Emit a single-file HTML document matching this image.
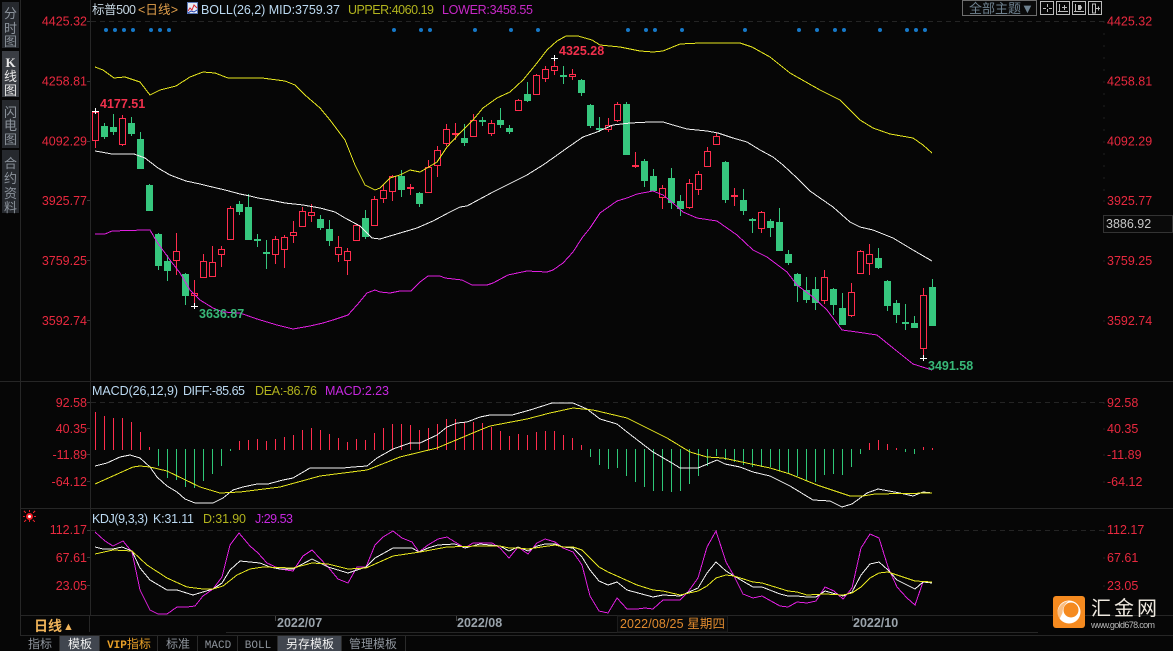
<!DOCTYPE html>
<html><head><meta charset="utf-8"><title>标普500</title>
<style>
html,body{margin:0;padding:0;background:#060606;width:1173px;height:651px;overflow:hidden}
svg{display:block}
text{font-family:"Liberation Sans","Noto Sans CJK SC",sans-serif;font-size:12.5px}
.l{fill:#e8293f;text-anchor:end}
.r{fill:#e8293f}
.b{font-weight:bold;font-size:12.5px}
.c{fill:none;stroke-width:1;shape-rendering:crispEdges}
.side{fill:#8b929b;font-size:13px;text-anchor:middle}
.tab{fill:#8e949c;font-size:12px;text-anchor:middle}
.date{fill:#9aa3ab;font-weight:bold;font-size:12.5px}
</style></head><body>
<svg width="1173" height="651" viewBox="0 0 1173 651" xmlns="http://www.w3.org/2000/svg">
<rect width="1173" height="651" fill="#060606"/>

<!-- frame -->
<g stroke="#262626" stroke-width="1" shape-rendering="crispEdges" fill="none">
<path d="M20.5 0V635M90.5 0V615M89.5 615V632"/>
<path d="M0 381.5H1173M20 508.5H1173M20 615.5H1173M226 632.5H1038M20 635.5H1173"/>
</g>
<g stroke="#242424" stroke-dasharray="5 4" shape-rendering="crispEdges" fill="none">
<path d="M91 21.500H1104M91 402.500H1104M91 530.500H1104"/>
</g>
<g stroke="#3a3a3a" shape-rendering="crispEdges" fill="none">
<path d="M87 21.500h3M87 81.500h3M87 141.500h3M87 200.500h3M87 260.500h3M87 320.500h3M87 402.500h3M87 428.500h3M87 454.500h3M87 481.500h3M87 530.500h3M87 557.500h3M87 585.500h3"/>
<path d="M1104 21.500v1M1104 33.500v1M1104 45.500v1M1104 57.500v1M1104 69.500v1M1104 81.500v1M1104 93.500v1M1104 105.500v1M1104 117.500v1M1104 129.500v1M1104 141.500v1M1104 153.500v1M1104 165.500v1M1104 177.500v1M1104 189.500v1M1104 200.500v1M1104 260.500v1M1104 320.500v1M1104 402.500v1M1104 428.500v1M1104 454.500v1M1104 481.500v1M1104 530.500v1M1104 557.500v1M1104 585.500v1"/>
</g>

<!-- sidebar -->
<rect x="2" y="2" width="17" height="46" fill="#26292e"/>
<rect x="2" y="51" width="17" height="46" fill="#3a3d43"/>
<rect x="2" y="100" width="17" height="48" fill="#26292e"/>
<rect x="2" y="150" width="17" height="63" fill="#26292e"/>
<g class="side">
<text class="side" x="10.500" y="18">分</text><text class="side" x="10.500" y="33">时</text><text class="side" x="10.500" y="46">图</text>
<text class="side" x="10.500" y="67" style="fill:#e8e8e8;font-weight:bold;font-family:'Liberation Serif',serif">K</text><text class="side" x="10.500" y="81" style="fill:#e8e8e8">线</text><text class="side" x="10.500" y="95" style="fill:#e8e8e8">图</text>
<text class="side" x="10.500" y="117">闪</text><text class="side" x="10.500" y="130">电</text><text class="side" x="10.500" y="144">图</text>
<text class="side" x="10.500" y="168">合</text><text class="side" x="10.500" y="183">约</text><text class="side" x="10.500" y="198">资</text><text class="side" x="10.500" y="212">料</text>
</g>

<!-- left axis -->
<text class="l" x="87" y="25.500">4425.32</text><text class="l" x="87" y="85.500">4258.81</text><text class="l" x="87" y="145.500">4092.29</text><text class="l" x="87" y="205">3925.77</text><text class="l" x="87" y="265">3759.25</text><text class="l" x="87" y="325">3592.74</text>
<text class="l" x="87" y="407">92.58</text><text class="l" x="87" y="433">40.35</text><text class="l" x="87" y="459">-11.89</text><text class="l" x="87" y="486">-64.12</text>
<text class="l" x="87" y="534">112.17</text><text class="l" x="87" y="562">67.61</text><text class="l" x="87" y="590">23.05</text>
<!-- right axis -->
<text class="r" x="1107" y="25.500">4425.32</text><text class="r" x="1107" y="85.500">4258.81</text><text class="r" x="1107" y="145.500">4092.29</text><text class="r" x="1107" y="205">3925.77</text><text class="r" x="1107" y="265">3759.25</text><text class="r" x="1107" y="325">3592.74</text>
<text class="r" x="1107" y="407">92.58</text><text class="r" x="1107" y="433">40.35</text><text class="r" x="1107" y="459">-11.89</text><text class="r" x="1107" y="486">-64.12</text>
<text class="r" x="1107" y="534">112.17</text><text class="r" x="1107" y="562">67.61</text><text class="r" x="1107" y="590">23.05</text>
<rect x="1103.500" y="215.500" width="69" height="17" fill="#0a0a0a" stroke="#333" shape-rendering="crispEdges"/>
<text x="1106" y="228" fill="#c8c8c8">3886.92</text>

<!-- header -->
<text x="92" y="14" fill="#c6d6e2" textLength="44">标普500</text>
<text x="138" y="14" fill="#e2a04c" textLength="40">&lt;日线&gt;</text>
<g shape-rendering="crispEdges"><rect x="187.500" y="2.500" width="10" height="11" fill="#e8edf5" stroke="#5a78b8"/></g>
<path d="M188 11l2-3 2 2 2-5 3 3" fill="none" stroke="#d8242c" stroke-width="1"/>
<path d="M188 13l3-2 3 1 3-2" fill="none" stroke="#2040b0" stroke-width="1"/>
<text x="201" y="14" fill="#bcdaf2" textLength="139">BOLL(26,2) MID:3759.37</text>
<text x="348" y="14" fill="#b2b41e" textLength="86">UPPER:4060.19</text>
<text x="442" y="14" fill="#c828c8" textLength="91">LOWER:3458.55</text>

<!-- top right controls -->
<rect x="962.500" y="0.500" width="74" height="15" fill="#0a0a0a" stroke="#6e6e6e" shape-rendering="crispEdges"/>
<text x="969" y="13" fill="#6f8290" style="font-size:13px">全部主题▼</text>
<g fill="none" stroke="#bcbcbc" shape-rendering="crispEdges">
<rect x="1040.500" y="1.500" width="13" height="13"/><rect x="1056.500" y="1.500" width="13" height="13"/><rect x="1072.500" y="1.500" width="13" height="13"/><rect x="1088.500" y="1.500" width="13" height="13"/>
<path d="M1047.500 4v3M1047.500 9v3M1043 8.500h3M1049 8.500h3"/>
<path d="M1059.500 4v8M1058 11.500h10M1064.500 5v5M1062 7.500h5"/>
<path d="M1075.500 4v8M1074 11.500h10M1078.500 5v5M1079.500 5.500v4h1v-4zM1081.500 6.500v2"/>
<path d="M1092.500 4v9h3v-9zM1096 8.500h4M1098.500 6.500v4"/>
</g>

<!-- blue dots -->
<g fill="#1678c8">
<circle cx="106" cy="30" r="2"/><circle cx="115" cy="30" r="2"/><circle cx="124" cy="30" r="2"/><circle cx="133" cy="30" r="2"/><circle cx="151" cy="30" r="2"/><circle cx="160" cy="30" r="2"/><circle cx="169" cy="30" r="2"/>
<circle cx="394" cy="30" r="2"/><circle cx="421" cy="30" r="2"/><circle cx="430" cy="30" r="2"/><circle cx="475" cy="30" r="2"/><circle cx="511" cy="30" r="2"/><circle cx="538" cy="30" r="2"/><circle cx="628" cy="30" r="2"/><circle cx="646" cy="30" r="2"/><circle cx="655" cy="30" r="2"/><circle cx="682" cy="30" r="2"/><circle cx="745" cy="30" r="2"/><circle cx="799" cy="30" r="2"/><circle cx="817" cy="30" r="2"/><circle cx="835" cy="30" r="2"/><circle cx="844" cy="30" r="2"/><circle cx="880" cy="30" r="2"/><circle cx="907" cy="30" r="2"/><circle cx="916" cy="30" r="2"/><circle cx="925" cy="30" r="2"/>
</g>

<!-- red candles -->
<path class="c" stroke="#ff2d4d" d="M95.500 111V112M95.500 141V148M92.500 112.500h6v28h-6zM122.500 115V118M122.500 145V146M119.500 118.500h6v26h-6zM176.500 233V251M176.500 261V275M173.500 251.500h6v9h-6zM194.500 280V293M194.500 296V306M191.500 293.500h6v2h-6zM203.500 254V261M200.500 261.500h6v16h-6zM212.500 246V262M209.500 262.500h6v14h-6zM221.500 246V249M221.500 255V267M218.500 249.500h6v5h-6zM230.500 206V208M227.500 208.500h6v31h-6zM275.500 236V239M275.500 255V264M272.500 239.500h6v15h-6zM284.500 235V237M284.500 250V268M281.500 237.500h6v12h-6zM293.500 221V232M293.500 236V243M290.500 232.500h6v3h-6zM302.500 207V211M299.500 211.500h6v15h-6zM311.500 204V212M311.500 216V222M308.500 212.500h6v3h-6zM338.500 236V247M338.500 255V262M335.500 247.500h6v7h-6zM347.500 248V251M347.500 261V275M344.500 251.500h6v9h-6zM356.500 224V225M353.500 225.500h6v15h-6zM374.500 196V199M371.500 199.500h6v26h-6zM383.500 184V190M383.500 199V203M380.500 190.500h6v8h-6zM392.500 175V176M392.500 192V201M389.500 176.500h6v15h-6zM410.500 184V195M407.500 187.500h6v1h-6zM428.500 160V167M425.500 167.500h6v25h-6zM437.500 146V150M437.500 166V177M434.500 150.500h6v15h-6zM446.500 124V129M446.500 144V146M443.500 129.500h6v14h-6zM455.500 123V140M452.500 133.500h6v1h-6zM473.500 114V120M470.500 120.500h6v16h-6zM491.500 120V123M491.500 134V136M488.500 123.500h6v10h-6zM518.500 99V100M515.500 100.500h6v10h-6zM536.500 74V75M533.500 75.500h6v19h-6zM545.500 66V69M545.500 79V82M542.500 69.500h6v9h-6zM554.500 58V66M554.500 71V75M551.500 66.500h6v4h-6zM572.500 69V74M572.500 77V80M569.500 74.500h6v2h-6zM608.500 118V125M608.500 130V132M605.500 125.500h6v4h-6zM617.500 102V104M617.500 121V122M614.500 104.500h6v16h-6zM635.500 152V168M632.500 165.500h6v1h-6zM662.500 185V188M662.500 198V209M659.500 188.500h6v9h-6zM689.500 179V183M689.500 208V209M686.500 183.500h6v24h-6zM698.500 171V174M698.500 190V195M695.500 174.500h6v15h-6zM707.500 147V151M704.500 151.500h6v15h-6zM716.500 133V136M713.500 136.500h6v8h-6zM734.500 188V206M731.500 195.500h6v1h-6zM761.500 211V212M761.500 229V233M758.500 212.500h6v16h-6zM824.500 270V277M824.500 301V304M821.500 277.500h6v23h-6zM851.500 283V292M851.500 316V317M848.500 292.500h6v23h-6zM860.500 250V251M857.500 251.500h6v22h-6zM869.500 244V254M869.500 264V275M866.500 254.500h6v9h-6zM923.500 288V295M923.500 349V358M920.500 295.500h6v53h-6z"/>
<path d="M407 187.500h7v1.500h-7zM452 133.500h7v1.500h-7zM632 165.500h7v1.500h-7zM731 195.500h7v1.500h-7z" fill="#ff2d4d" shape-rendering="crispEdges"/>

<!-- green candles -->
<path class="c" stroke="#36c77e" style="fill:#36c77e" d="M104.500 123V139M101.500 126.500h6v10h-6zM113.500 114V135M110.500 127.500h6v4h-6zM131.500 117V136M128.500 123.500h6v10h-6zM140.500 132V169M137.500 139.500h6v29h-6zM149.500 184V211M146.500 185.500h6v25h-6zM158.500 233V270M155.500 234.500h6v31h-6zM167.500 255V281M164.500 261.500h6v9h-6zM185.500 273V305M182.500 274.500h6v21h-6zM239.500 201V215M236.500 204.500h6v7h-6zM248.500 194V240M245.500 207.500h6v32h-6zM257.500 234V247M254.500 239.500h6v1h-6zM266.500 240V269M263.500 252.500h6v1h-6zM320.500 215V230M317.500 219.500h6v8h-6zM329.500 220V246M326.500 229.500h6v11h-6zM365.500 210V239M362.500 218.500h6v18h-6zM401.500 170V197M398.500 176.500h6v13h-6zM419.500 192V207M416.500 193.500h6v10h-6zM464.500 124V146M461.500 138.500h6v4h-6zM482.500 117V126M479.500 120.500h6v1h-6zM500.500 108V128M497.500 120.500h6v4h-6zM509.500 125V134M506.500 128.500h6v3h-6zM527.500 82V102M524.500 94.500h6v6h-6zM563.500 66V84M560.500 75.500h6v1h-6zM581.500 79V96M578.500 80.500h6v12h-6zM590.500 104V128M587.500 105.500h6v20h-6zM599.500 117V132M596.500 128.500h6v1h-6zM626.500 102V155M623.500 104.500h6v50h-6zM644.500 159V187M641.500 161.500h6v19h-6zM653.500 169V191M650.500 176.500h6v14h-6zM671.500 168V209M668.500 178.500h6v24h-6zM680.500 195V216M677.500 201.500h6v7h-6zM725.500 161V203M722.500 162.500h6v37h-6zM743.500 189V215M740.500 200.500h6v10h-6zM752.500 218V233M749.500 219.500h6v1h-6zM770.500 219V237M767.500 221.500h6v6h-6zM779.500 208V251M776.500 222.500h6v28h-6zM788.500 250V265M785.500 254.500h6v8h-6zM797.500 273V302M794.500 274.500h6v11h-6zM806.500 277V303M803.500 290.500h6v9h-6zM815.500 277V310M812.500 289.500h6v13h-6zM833.500 288V315M830.500 289.500h6v15h-6zM842.500 293V325M839.500 308.500h6v16h-6zM878.500 248V269M875.500 258.500h6v9h-6zM887.500 280V311M884.500 281.500h6v24h-6zM896.500 300V323M893.500 303.500h6v11h-6zM905.500 304V330M902.500 322.500h6v1h-6zM914.500 316V328M911.500 323.500h6v4h-6zM932.500 279V326M929.500 287.500h6v38h-6z"/>

<!-- BOLL lines -->
<polyline class="c" stroke="#e6e61e" points="95,67 103,70 114,78 125,77 140,82 150,95 160,90 176,86 190,77 203,72 215,73 228,78 262,78 285,81 295,85 305,95 320,108 330,120 345,140 355,165 365,185 375,190 380,188 390,178 400,175 410,170 420,172 427,168 437,162 447,147 460,133 473,120 483,108 497,98 510,92 523,80 537,63 547,50 557,41 566,36 578,36 592,40 600,45 620,47 640,51 653,52 663,51 680,44 700,43 740,43 752,47 770,57 790,73 820,90 840,100 860,120 873,128 890,134 913,138 923,145 932,153"/>
<polyline class="c" stroke="#f2f2f2" points="95,151 101,152 112,154 134,154 145,158 158,168 170,175 186,181 200,184 208,186 225,190 240,194 250,196 258,198 270,200 285,203 303,205 320,208 335,212 345,218 360,226 372,238 380,239 390,236 417,228 433,221 450,212 460,207 467,206 480,199 493,192 513,182 527,175 543,165 553,158 567,148 583,137 597,132 613,125 630,123 650,122 663,122 673,125 687,129 707,131 718,133 733,138 747,142 760,150 773,157 783,165 797,178 810,191 820,198 833,207 850,222 860,227 873,230 893,238 913,250 932,261"/>
<polyline class="c" stroke="#e01fe0" points="95,234 105,234 112,231 145,230 150,230 157,242 170,260 180,273 190,290 200,300 213,308 223,312 240,313 257,319 277,325 293,329 310,326 323,323 333,320 348,315 357,305 367,293 375,290 380,292 390,293 400,291 411,291 420,282 428,276 440,276 445,278 462,280 472,285 487,285 493,283 508,275 527,271 547,272 553,270 563,263 573,252 582,238 590,228 600,213 617,201 627,198 637,194 653,191 663,195 673,203 683,212 697,218 717,221 727,228 737,235 753,250 767,257 787,272 797,285 813,297 827,310 842,330 857,332 877,335 893,348 913,364 932,370"/>

<!-- hi/lo markers -->
<path d="M92 111.500h7M95.500 108v6M191 306.500h7M194.500 303v6M551 58.500h7M554.500 55v6M920 358.500h7M923.500 355v6" stroke="#fff" fill="none" shape-rendering="crispEdges"/>
<text x="100" y="108" class="b" fill="#f0304c">4177.51</text>
<text x="559" y="55" class="b" fill="#f0304c">4325.28</text>
<text x="199" y="318" class="b" fill="#38b878">3636.87</text>
<text x="928" y="370" class="b" fill="#38b878">3491.58</text>

<!-- MACD -->
<text x="92" y="395" fill="#bcdaf2" textLength="86">MACD(26,12,9)</text>
<text x="183" y="395" fill="#bcdaf2" textLength="62">DIFF:-85.65</text>
<text x="255" y="395" fill="#b2b41e" textLength="62">DEA:-86.76</text>
<text x="325" y="395" fill="#c828e0" textLength="64">MACD:2.23</text>
<path class="c" stroke="#ff2d4d" d="M95.500 412V450M104.500 416V450M113.500 418V450M122.500 418V450M131.500 422V450M140.500 432V450M149.500 447V450M239.500 441V450M248.500 440V450M257.500 439V450M266.500 441V450M275.500 439V450M284.500 437V450M293.500 435V450M302.500 430V450M311.500 428V450M320.500 430V450M329.500 434V450M338.500 438V450M347.500 442V450M356.500 439V450M365.500 440V450M374.500 433V450M383.500 428V450M392.500 424V450M401.500 424V450M410.500 425V450M419.500 430V450M428.500 428V450M437.500 424V450M446.500 419V450M455.500 419V450M464.500 422V450M473.500 422V450M482.500 423V450M491.500 427V450M500.500 431V450M509.500 436V450M518.500 434V450M527.500 435V450M536.500 432V450M545.500 431V450M554.500 431V450M563.500 435V450M572.500 438V450M581.500 445V450M869.500 443V450M878.500 440V450M887.500 444V450M896.500 448V450M923.500 447V450M932.500 448V450"/>
<path class="c" stroke="#2fc878" d="M158.500 449V466M167.500 449V478M176.500 449V480M185.500 449V487M194.500 449V488M203.500 449V481M212.500 449V474M221.500 449V466M230.500 449V451M590.500 449V457M599.500 449V465M608.500 449V469M617.500 449V468M626.500 449V476M635.500 449V482M644.500 449V487M653.500 449V491M662.500 449V491M671.500 449V492M680.500 449V491M689.500 449V484M698.500 449V476M707.500 449V466M716.500 449V456M725.500 449V460M734.500 449V462M743.500 449V465M752.500 449V467M761.500 449V467M770.500 449V467M779.500 449V471M788.500 449V473M797.500 449V476M806.500 449V481M815.500 449V482M824.500 449V475M833.500 449V474M842.500 449V475M851.500 449V467M860.500 449V454M905.500 449V452M914.500 449V454"/>
<polyline class="c" stroke="#f2f2f2" points="95,466 107,463 120,457 130,455 140,458 150,467 157,477 167,486 177,492 185,499 195,503 213,503 223,498 233,490 243,487 257,484 268,484 283,480 293,478 310,468 343,468 353,467 367,466 377,458 393,449 410,443 420,443 437,435 447,427 457,423 467,422 480,417 490,415 512,415 530,410 552,403 573,403 587,409 600,419 617,424 627,432 640,442 653,452 672,463 680,468 698,468 717,460 725,464 740,467 753,472 770,476 790,486 813,500 830,501 842,507 852,504 867,493 878,489 900,493 913,496 923,492 932,493"/>
<polyline class="c" stroke="#e6e61e" points="95,484 133,467 140,466 150,467 167,471 200,487 220,493 240,492 280,487 320,476 367,470 400,457 437,448 480,430 490,426 527,419 550,413 573,408 593,410 627,418 667,438 690,452 707,457 723,458 770,468 790,474 817,485 850,496 863,496 875,494 932,493"/>

<!-- KDJ -->
<g fill="none" stroke="#e0202a" shape-rendering="crispEdges"><path d="M29.500 510v2M29.500 520v2M23 516.500h2M34 516.500h2M24 511l2 2M35 511l-2 2M24 522l2-2M35 522l-2-2"/></g>
<circle cx="29.500" cy="516.500" r="3.500" fill="#ee1c25"/><circle cx="29.500" cy="516.500" r="1.500" fill="#fff"/>
<text x="92" y="523" fill="#bcdaf2" textLength="56">KDJ(9,3,3)</text>
<text x="153" y="523" fill="#bcdaf2" textLength="41">K:31.11</text>
<text x="203" y="523" fill="#b2b41e" textLength="43">D:31.90</text>
<text x="255" y="523" fill="#c828e0" textLength="38">J:29.53</text>
<polyline class="c" stroke="#e01fe0" points="95,532 105,541 113,546 123,541 132,552 140,590 150,610 158,614 167,614 177,607 187,607 195,606 203,596 213,589 222,577 230,545 239,533 250,546 258,553 267,563 280,569 293,571 303,556 312,550 328,567 338,579 348,583 357,567 366,567 375,545 383,537 393,531 402,538 412,542 419,552 428,545 438,539 447,537 455,542 465,548 473,543 492,543 500,548 509,558 518,547 528,554 537,543 545,539 555,542 563,548 573,552 582,565 590,596 599,611 608,613 617,598 627,609 637,609 645,608 653,609 663,600 680,600 688,592 698,578 707,547 716,531 726,562 734,576 743,594 753,598 762,596 780,606 788,607 797,602 807,603 816,601 825,587 834,591 843,599 852,588 861,548 870,534 879,538 888,567 897,587 907,598 915,605 923,582 932,583"/>
<polyline class="c" stroke="#f2f2f2" points="95,547 103,549 113,549 122,547 132,551 140,568 150,580 167,590 177,590 193,595 203,592 213,589 222,583 230,570 240,561 260,563 270,567 280,569 293,569 312,559 328,567 348,573 366,567 375,558 393,548 412,548 419,552 428,548 438,545 455,544 465,548 480,544 500,546 509,551 518,547 528,551 537,546 545,544 555,544 563,547 573,548 582,557 590,570 599,581 608,585 617,582 627,590 653,597 663,595 680,596 698,588 707,573 716,562 726,571 734,576 753,587 762,587 780,594 788,596 797,596 807,597 816,597 825,591 843,596 852,592 861,575 870,564 879,562 888,570 897,580 915,589 923,582 932,583"/>
<polyline class="c" stroke="#e6e61e" points="95,554 113,550 132,551 147,565 167,578 187,587 203,589 213,589 223,586 237,575 250,569 263,567 293,568 312,563 328,564 348,569 366,568 393,556 420,552 447,547 480,546 500,546 509,548 518,548 528,549 555,545 563,547 573,547 582,550 599,567 608,572 617,576 637,585 653,590 663,591 680,595 698,591 707,586 716,578 726,575 734,576 753,582 762,583 788,591 797,592 807,595 825,594 843,595 852,593 861,587 870,578 879,573 888,572 897,575 915,581 932,582"/>

<!-- date axis -->
<path d="M275.500 616v5M456.500 616v5M852.500 616v5" stroke="#444" shape-rendering="crispEdges"/>
<text x="277" y="627" class="date">2022/07</text>
<text x="457" y="627" class="date">2022/08</text>
<rect x="617.500" y="616" width="110" height="16" fill="#0a0a0a" stroke="#1c1c1c" shape-rendering="crispEdges"/>
<text x="620" y="628" fill="#e08a2e" textLength="105">2022/08/25 星期四</text>
<text x="853" y="627" class="date">2022/10</text>
<text x="34" y="631" fill="#f0b45a" style="font-weight:bold;font-size:14px">日线</text>
<text x="63" y="630" fill="#f0b45a" style="font-size:11px">▲</text>

<!-- tabs -->
<rect x="60" y="636" width="39" height="15" fill="#41464f"/>
<rect x="278" y="636" width="63" height="15" fill="#41464f"/>
<path d="M59.500 636V651M99.500 636V651M157.500 636V651M197.500 636V651M237.500 636V651M277.500 636V651M341.500 636V651M405.500 636V651" stroke="#2a2a2a" shape-rendering="crispEdges"/>
<text class="tab" x="40" y="648">指标</text>
<text class="tab" x="80" y="648" style="fill:#f0f0f0">模板</text>
<text class="tab" x="129" y="648" style="fill:#e8a028"><tspan style="font-family:'Liberation Mono',monospace;font-weight:bold;font-size:11px">VIP</tspan>指标</text>
<text class="tab" x="178" y="648">标准</text>
<text class="tab" x="218" y="648" style="font-family:'Liberation Mono',monospace;font-size:11px">MACD</text>
<text class="tab" x="258" y="648" style="font-family:'Liberation Mono',monospace;font-size:11px">BOLL</text>
<text class="tab" x="310" y="648" style="fill:#f0f0f0">另存模板</text>
<text class="tab" x="373" y="648">管理模板</text>

<!-- logo -->
<rect x="1053" y="596" width="32" height="32" rx="3" fill="#f58a1f"/>
<circle cx="1069" cy="612" r="11.500" fill="#fff"/>
<circle cx="1071" cy="610" r="7.500" fill="#f58a1f"/>
<path d="M1057.500 612c1-6 5-10 11-11-3 3-6 6-6 12l-3 6c-1-2-2-4-2-7z" fill="#f58a1f" opacity=".55"/>
<text x="1091" y="615" fill="#efe9e0" style="font-size:20px;letter-spacing:3px">汇金网</text>
<text x="1091" y="628" fill="#b8b8b8" style="font-size:9px" textLength="64">www.gold678.com</text>
</svg>
</body></html>
